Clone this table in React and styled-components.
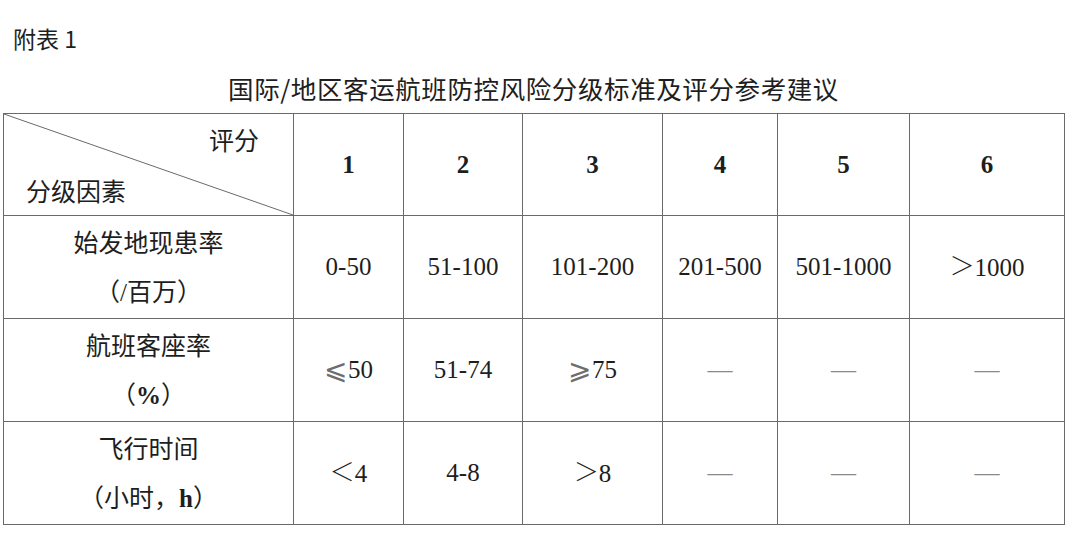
import React from 'react';
import styled, { createGlobalStyle } from 'styled-components';

const GlobalStyle = createGlobalStyle`
  html, body {
    margin: 0;
    padding: 0;
    background: #fff;
  }
  body {
    font-family: "Noto Sans CJK SC", "Noto Sans", sans-serif;
    color: #1e1e1e;
  }
`;

const Page = styled.div`
  width: 1080px;
  height: 537px;
  padding: 23px 0 0 3px;
  box-sizing: border-box;
  overflow: hidden;
`;

const Note = styled.div`
  margin-left: 10px;
  font-size: 23px;
  line-height: 30px;
  height: 30px;
`;

const Title = styled.div`
  width: 1061px;
  margin-top: 20px;
  font-size: 25.5px;
  line-height: 30px;
  text-align: center;
  letter-spacing: 0.6px;
`;

const Table = styled.table`
  margin-top: 10px;
  width: 1061px;
  table-layout: fixed;
  border-collapse: collapse;
`;

const Row = styled.tr`
  height: ${(p) => p.$h}px;
`;

const Cell = styled.td`
  border: 1px solid #6a6a6a;
  padding: 0;
  text-align: center;
  vertical-align: middle;
  font-family: "Liberation Serif", "Noto Sans CJK SC", serif;
  font-size: 25px;
  line-height: 30px;
  font-weight: ${(p) => (p.$bold ? 700 : 400)};
  color: ${(p) => (p.$muted ? '#8a8a8a' : '#1e1e1e')};
`;

const CornerCell = styled.td`
  position: relative;
  border: 1px solid #6a6a6a;
  padding: 0;
`;

const Diagonal = styled.svg`
  position: absolute;
  inset: 0;
  width: 100%;
  height: 100%;
`;

const CornerInner = styled.div`
  display: flex;
  flex-direction: column;
  justify-content: space-between;
  height: 101px;
  padding: 10px 34px 10px 22px;
  box-sizing: border-box;
  font-size: 25px;
  line-height: 30px;
`;

const CornerTop = styled.span`
  align-self: flex-end;
`;

const CornerBottom = styled.span`
  align-self: flex-start;
`;

const FactorCell = styled.td`
  border: 1px solid #6a6a6a;
  padding: 0;
  text-align: center;
  vertical-align: middle;
  font-size: 25px;
  line-height: 49px;
`;

const Latin = styled.span`
  font-family: "Liberation Serif", serif;
  font-weight: ${(p) => (p.$bold ? 700 : 400)};
`;

const Cjk = styled.span`
  font-family: "Noto Sans CJK SC", sans-serif;
  font-weight: 300;
  line-height: 1;
  display: inline-block;
  vertical-align: 1px;
`;

const Slant = styled.span`
  font-family: "DejaVu Serif", "Noto Sans CJK SC", serif;
  font-size: 28px;
  font-weight: 400;
  line-height: 1;
  display: inline-block;
  vertical-align: -1px;
  margin-right: 1px;
  color: #6e6e6e;
`;

const widths = [290, 110, 119, 140, 115, 132, 155];

const rows = [
  {
    label: ['始发地现患率', <>（<Latin>/</Latin>百万）</>],
    values: [
      '0-50', '51-100', '101-200', '201-500', '501-1000',
      <><Cjk>＞</Cjk>1000</>,
    ],
  },
  {
    label: ['航班客座率', <>（<Latin $bold>%</Latin>）</>],
    values: [
      <><Slant>⩽</Slant>50</>, '51-74', <><Slant>⩾</Slant>75</>, '—', '—', '—',
    ],
  },
  {
    label: ['飞行时间', <>（小时，<Latin $bold>h</Latin>）</>],
    values: [
      <><Cjk>＜</Cjk>4</>, '4-8', <><Cjk>＞</Cjk>8</>, '—', '—', '—',
    ],
  },
];

export default function App() {
  return (
    <>
      <GlobalStyle />
      <Page>
        <Note>附表 1</Note>
        <Title>国际/地区客运航班防控风险分级标准及评分参考建议</Title>
        <Table>
          <colgroup>
            {widths.map((w, i) => (
              <col key={i} style={{ width: w }} />
            ))}
          </colgroup>
          <tbody>
            <Row $h={102}>
              <CornerCell>
                <Diagonal viewBox="0 0 100 100" preserveAspectRatio="none">
                  <line x1="0" y1="0" x2="100" y2="100" stroke="#6a6a6a" strokeWidth="1" vectorEffect="non-scaling-stroke" />
                </Diagonal>
                <CornerInner>
                  <CornerTop>评分</CornerTop>
                  <CornerBottom>分级因素</CornerBottom>
                </CornerInner>
              </CornerCell>
              {[1, 2, 3, 4, 5, 6].map((n) => (
                <Cell key={n} $bold>{n}</Cell>
              ))}
            </Row>
            {rows.map((r, i) => (
              <Row key={i} $h={103}>
                <FactorCell>
                  <div>{r.label[0]}</div>
                  <div>{r.label[1]}</div>
                </FactorCell>
                {r.values.map((v, j) => (
                  <Cell key={j} $muted={v === '—'}>{v}</Cell>
                ))}
              </Row>
            ))}
          </tbody>
        </Table>
      </Page>
    </>
  );
}
